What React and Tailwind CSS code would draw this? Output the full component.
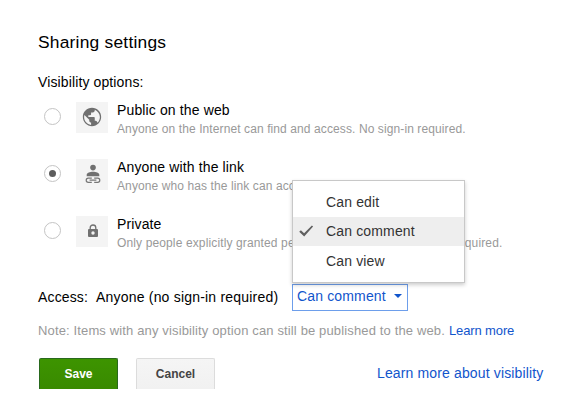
function GlobeIcon() {
  return (
    <svg width="22" height="22" viewBox="0 0 24 24" className="block shrink-0 -translate-y-px">
      <path
        fill="#707070"
        d="M12 2C6.48 2 2 6.48 2 12s4.48 10 10 10 10-4.48 10-10S17.52 2 12 2zm-1 18.6c-4.2-.49-7.6-3.95-7.6-8.6 0-.8.1-1.5.3-2.1L9 15v1c0 1.1.9 2 2 2v2.6zm7.2-2.4c-.26-.81-1.3-2.2-2.2-2.2h-1v-3c0-.55-.45-1-1-1H8v-2h2c.55 0 1-.45 1-1V7h2c1.1 0 2-.9 2-2v-1c3.3 1.3 5.6 4.4 5.6 8 0 2.4-.9 4.5-2.4 6.2z"
      />
    </svg>
  );
}

function PersonLinkIcon() {
  return (
    <svg width="16" height="20" viewBox="0 0 16 20" className="ml-px block -translate-y-px">
      <circle cx="8" cy="3.6" r="2.8" fill="#707070" />
      <path fill="#707070" d="M1.7 12.3V10.8C1.7 8.8 5 7.8 8 7.8s6.3 1 6.3 3v1.5Z" />
      <g fill="none" stroke="#777" strokeWidth="1.2">
        <path d="M6.8 14.1H3.3a2.1 2.1 0 0 0 0 4.2h3.5M9.2 14.1h3.5a2.1 2.1 0 0 1 0 4.2H9.2M4.6 16.2h6.8" />
      </g>
    </svg>
  );
}

function LockIcon() {
  return (
    <svg width="12" height="14" viewBox="0 0 12 14" className="ml-px block -translate-y-px">
      <path fill="none" stroke="#707070" strokeWidth="1.3" d="M3.2 5.5V3.8a2.8 2.8 0 0 1 5.6 0v1.7" />
      <rect x="1" y="5" width="10" height="8" rx="1" fill="#707070" />
      <circle cx="6" cy="9" r="1.7" fill="#f3f3f3" />
    </svg>
  );
}

function Option({ icon, title, text, textClass, checked }) {
  return (
    <div className="flex h-[57px] items-start">
      <div className="ml-[5.5px] mr-[-0.5px] mt-[6px] flex h-[17px] w-[17px] shrink-0 items-center justify-center rounded-full border border-[#c4c4c4]">
        {checked && <div className="h-[7px] w-[7px] rounded-full bg-[#5c5c5c]" />}
      </div>
      <div className="ml-4 flex h-[31px] w-8 shrink-0 items-center justify-center bg-[#f4f4f4]">{icon}</div>
      <div className="ml-[9px] whitespace-nowrap">
        <div className="h-4 text-[14px] leading-4 tracking-[0.13px]">{title}</div>
        <div className={`mt-[3px] text-[12px] leading-4 text-[#999] ${textClass}`}>{text}</div>
      </div>
    </div>
  );
}

function AccessMenu() {
  return (
    <div className="absolute -top-[104px] left-0 z-10 h-[103px] w-[173px] border border-[#c8c8c8] bg-white pt-[7px] text-[14px] tracking-[0.15px] text-[#333] shadow-[0_2px_4px_rgba(0,0,0,0.2)]">
      <div className="h-[29px] pl-[33px] leading-[29px]">Can edit</div>
      <div className="flex h-[29px] items-center bg-[#eee] leading-[29px]">
        <svg width="15" height="12" viewBox="0 0 15 12" className="ml-[6px] mr-3 block -translate-y-px">
          <path fill="#606060" d="M0.2 6.8 1.9 5.3 5.1 8.2 12.9 0.6 14.1 1.6 5.2 11.6Z" />
        </svg>
        Can comment
      </div>
      <div className="h-[29px] pl-[33px] leading-[31px]">Can view</div>
    </div>
  );
}

export default function App() {
  return (
    <div className="h-[413px] w-[582px] overflow-hidden bg-white pl-[38px] pt-8 font-['Liberation_Sans',Arial,sans-serif] text-black">
      <h1 className="h-5 whitespace-nowrap text-[17.4px] leading-5 tracking-[0.22px]">Sharing settings</h1>
      <div className="mt-[22px] h-4 text-[14px] leading-4 tracking-[0.12px]">Visibility options:</div>

      <div className="mt-3 h-[171px]">
        <Option icon={<GlobeIcon />} title="Public on the web" text="Anyone on the Internet can find and access. No sign-in required." textClass="tracking-[0.1px]" />
        <Option icon={<PersonLinkIcon />} title="Anyone with the link" text="Anyone who has the link can access. No sign-in required." textClass="tracking-[0.1px]" checked />
        <Option icon={<LockIcon />} title="Private" text="Only people explicitly granted permission can access. Sign-in required." textClass="tracking-[0.13px]" />
      </div>

      <div className="mt-[11px] flex h-[27px] items-center whitespace-nowrap text-[14px]">
        <span className="w-[58px] tracking-[0.15px]">Access:</span>
        <span className="w-[196px] tracking-[0.2px]">Anyone (no sign-in required)</span>
        <div className="relative h-[27px] w-[116px]">
          <div className="flex h-[27px] w-[116px] items-center border border-[#6d9eeb] pb-[2px] pl-1 tracking-[0.15px] text-[#15c]">
            <span className="w-[97px]">Can comment</span>
            <svg width="8" height="4" viewBox="0 0 8 4" className="-translate-y-px">
              <path fill="#15c" d="M0 0h8L4 4Z" />
            </svg>
          </div>
          <AccessMenu />
        </div>
      </div>

      <div className="mt-3 flex h-4 whitespace-nowrap text-[13px] leading-4 text-[#999]">
        <span className="w-[411px] tracking-[0.14px]">Note: Items with any visibility option can still be published to the web.</span>
        <span className="tracking-[-0.13px] text-[#15c]">Learn more</span>
      </div>

      <div className="ml-px mt-[19px] flex h-[31px]">
        <button className="h-[31px] w-[79px] rounded-t-[2px] border border-b-0 border-[#29691d] bg-linear-to-b from-[#3d9400] to-[#398a00] text-[12px] font-bold text-white">Save</button>
        <button className="ml-[18px] h-[31px] w-[79px] rounded-t-[2px] border border-b-0 border-[#dcdcdc] bg-linear-to-b from-[#f5f5f5] to-[#f1f1f1] text-[12px] font-bold text-[#444]">Cancel</button>
        <span className="ml-[162px] whitespace-nowrap text-[14px] leading-[31px] tracking-[0.14px] text-[#15c]">Learn more about visibility</span>
      </div>
    </div>
  );
}
